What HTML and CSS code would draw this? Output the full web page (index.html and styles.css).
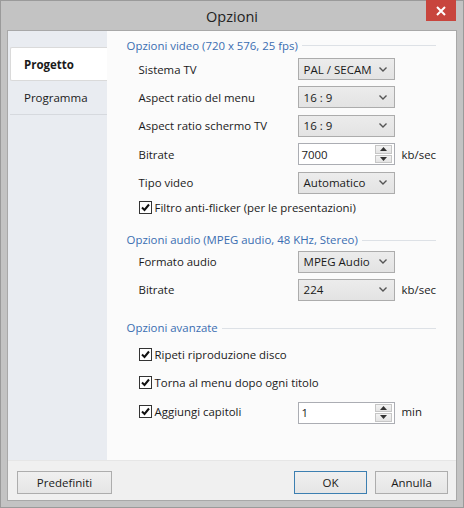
FILE: index.html
```html
<!DOCTYPE html>
<html>
<head>
<meta charset="utf-8">
<link rel="stylesheet" href="styles.css">
</head>
<body>
<div class="window">
  <div class="titlebar">
    <span class="title">Opzioni</span>
    <div class="close"><svg width="10" height="10" viewBox="0 0 10 10"><path d="M1 1L9 9M9 1L1 9" stroke="#fff" stroke-width="2"/></svg></div>
  </div>
  <div class="client">
    <div class="main">
      <div class="sidebar">
        <div class="tab active">Progetto</div>
        <div class="tab">Programma</div>
      </div>
      <div class="content">
        <div class="group-head"><span>Opzioni video (720 x 576, 25 fps)</span><i></i></div>
        <div class="rows video-rows">
          <span class="label">Sistema TV</span>
          <div class="select">PAL / SECAM<svg class="chev" width="8" height="5" viewBox="0 0 8 5"><path d="M0.5 0.5L4 4L7.5 0.5" fill="none" stroke="#555" stroke-width="1.4"/></svg></div>
          <span></span>
          <span class="label">Aspect ratio del menu</span>
          <div class="select">16 : 9<svg class="chev" width="8" height="5" viewBox="0 0 8 5"><path d="M0.5 0.5L4 4L7.5 0.5" fill="none" stroke="#555" stroke-width="1.4"/></svg></div>
          <span></span>
          <span class="label">Aspect ratio schermo TV</span>
          <div class="select">16 : 9<svg class="chev" width="8" height="5" viewBox="0 0 8 5"><path d="M0.5 0.5L4 4L7.5 0.5" fill="none" stroke="#555" stroke-width="1.4"/></svg></div>
          <span></span>
          <span class="label">Bitrate</span>
          <div class="spin"><span class="val">7000</span><div class="spinbtns"><div class="sb"><svg width="7" height="4" viewBox="0 0 7 4"><path d="M0 4L3.5 0L7 4Z" fill="#333"/></svg></div><div class="sb"><svg width="7" height="4" viewBox="0 0 7 4"><path d="M0 0L3.5 4L7 0Z" fill="#333"/></svg></div></div></div>
          <span class="unit">kb/sec</span>
          <span class="label">Tipo video</span>
          <div class="select">Automatico<svg class="chev" width="8" height="5" viewBox="0 0 8 5"><path d="M0.5 0.5L4 4L7.5 0.5" fill="none" stroke="#555" stroke-width="1.4"/></svg></div>
          <span></span>
        </div>
        <div class="check filtro"><span class="box"><svg width="11" height="11" viewBox="0 0 11 11"><path d="M2 5.5L4.5 8L9 2.5" fill="none" stroke="#111" stroke-width="2"/></svg></span>Filtro anti-flicker (per le presentazioni)</div>

        <div class="group-head audio-head"><span>Opzioni audio (MPEG audio, 48 KHz, Stereo)</span><i></i></div>
        <div class="rows audio-rows">
          <span class="label">Formato audio</span>
          <div class="select">MPEG Audio<svg class="chev" width="8" height="5" viewBox="0 0 8 5"><path d="M0.5 0.5L4 4L7.5 0.5" fill="none" stroke="#555" stroke-width="1.4"/></svg></div>
          <span></span>
          <span class="label">Bitrate</span>
          <div class="select">224<svg class="chev" width="8" height="5" viewBox="0 0 8 5"><path d="M0.5 0.5L4 4L7.5 0.5" fill="none" stroke="#555" stroke-width="1.4"/></svg></div>
          <span class="unit">kb/sec</span>
        </div>

        <div class="group-head adv-head"><span>Opzioni avanzate</span><i></i></div>
        <div class="adv-rows">
          <div class="check"><span class="box"><svg width="11" height="11" viewBox="0 0 11 11"><path d="M2 5.5L4.5 8L9 2.5" fill="none" stroke="#111" stroke-width="2"/></svg></span>Ripeti riproduzione disco</div>
          <div class="check"><span class="box"><svg width="11" height="11" viewBox="0 0 11 11"><path d="M2 5.5L4.5 8L9 2.5" fill="none" stroke="#111" stroke-width="2"/></svg></span>Torna al menu dopo ogni titolo</div>
          <div class="cap-row">
            <div class="check"><span class="box"><svg width="11" height="11" viewBox="0 0 11 11"><path d="M2 5.5L4.5 8L9 2.5" fill="none" stroke="#111" stroke-width="2"/></svg></span>Aggiungi capitoli</div>
            <div class="spin"><span class="val">1</span><div class="spinbtns"><div class="sb"><svg width="7" height="4" viewBox="0 0 7 4"><path d="M0 4L3.5 0L7 4Z" fill="#333"/></svg></div><div class="sb"><svg width="7" height="4" viewBox="0 0 7 4"><path d="M0 0L3.5 4L7 0Z" fill="#333"/></svg></div></div></div>
            <span class="unit">min</span>
          </div>
        </div>
      </div>
    </div>
    <div class="footer">
      <button class="btn btn-def">Predefiniti</button>
      <span class="grow"></span>
      <button class="btn btn-ok">OK</button>
      <button class="btn">Annulla</button>
    </div>
  </div>
</div>
</body>
</html>
```

FILE: styles.css
```css
* { box-sizing: border-box; }
html, body { margin: 0; padding: 0; }
body {
  font-family: "Open Sans", "Noto Sans", sans-serif;
  font-size: 11.4px;
  color: #1a1a1a;
  background: #c2c2c2;
}
.window {
  width: 464px;
  height: 508px;
  background: #c3c3c3;
  border: 1px solid #9a9a9a;
  padding: 0 6px 6px;
  display: flex;
  flex-direction: column;
}
.titlebar {
  height: 29px;
  display: flex;
  justify-content: center;
  align-items: center;
  position: relative;
}
.title {
  font-size: 14.5px;
  color: #222;
  margin-top: 2px;
}
.close {
  position: absolute;
  right: 1px;
  top: -1px;
  width: 30px;
  height: 21px;
  background: #c8453d;
  display: flex;
  align-items: center;
  justify-content: center;
}
.client {
  flex: 1;
  border: 1px solid #a8a8a8;
  background: #f0f0f0;
  display: flex;
  flex-direction: column;
}
.main {
  height: 429px;
  display: flex;
}
.sidebar {
  width: 99px;
  background: #e9ecf1;
  padding-top: 16px;
  padding-left: 2px;
}
.tab {
  height: 34px;
  display: flex;
  align-items: center;
  padding-left: 14px;
  font-size: 11.5px;
  border-bottom: 1px solid #d6d9de;
}
.tab.active {
  background: #ffffff;
  font-weight: bold;
  border: 1px solid #dadada;
  border-right: none;
  border-radius: 2px 0 0 2px;
  padding-left: 13px;
}
.content {
  flex: 1;
  background: #fbfbfb;
  padding: 6px 20px 0 20px;
}
.group-head {
  display: flex;
  align-items: center;
  height: 16px;
  color: #3a6db1;
}
.group-head span { white-space: nowrap; }
.group-head i {
  flex: 1;
  height: 1px;
  background: #dde1e6;
  margin-left: 4px;
  margin-top: 1px;
}
.rows {
  display: grid;
  grid-template-columns: 159px 97px auto;
  grid-auto-rows: 22px;
  row-gap: 6.4px;
  align-items: center;
  padding-left: 12px;
}
.video-rows { margin-top: 5px; }
.audio-rows { margin-top: 3px; row-gap: 6px; }
.label { white-space: nowrap; }
.unit { margin-left: 7px; }
.select {
  height: 22px;
  border: 1px solid #acacac;
  background: linear-gradient(#ececec, #e3e3e3);
  display: flex;
  align-items: center;
  padding-left: 5px;
  padding-right: 7px;
  font-size: 11.5px;
}
.select .chev { margin-left: auto; }
.spin {
  height: 22px;
  width: 97px;
  border: 1px solid #abadb3;
  background: #fff;
  display: flex;
  align-items: center;
  padding-left: 3px;
}
.spin .val { flex: 1; }
.spinbtns {
  width: 17px;
  height: 18px;
  display: flex;
  flex-direction: column;
  gap: 1px;
  margin-right: 2px;
}
.sb {
  flex: 1;
  background: linear-gradient(#f3f3f3, #e4e4e4);
  border: 1px solid #c6c6c6;
  display: flex;
  align-items: center;
  justify-content: center;
}
.check {
  display: flex;
  align-items: center;
  height: 22px;
  white-space: nowrap;
}
.box {
  width: 13px;
  height: 13px;
  border: 1px solid #333;
  background: #fff;
  margin-right: 3px;
  display: flex;
  align-items: center;
  justify-content: center;
}
.filtro { margin-top: 3px; padding-left: 12px; }
.audio-head { margin-top: 13px; }
.adv-head { margin-top: 19px; }
.adv-rows {
  margin-top: 8px;
  padding-left: 12px;
  display: flex;
  flex-direction: column;
  gap: 6px;
}
.cap-row {
  display: grid;
  grid-template-columns: 159px 97px auto;
  align-items: center;
}
.cap-row .spin { margin-top: 2px; }
.footer {
  flex: 1;
  display: flex;
  align-items: flex-start;
  padding: 10px 8px 0 9px;
  gap: 8px;
  border-top: 1px solid #e6e6e6;
}
.grow { flex: 1; }
.btn {
  font-family: inherit;
  font-size: 11.5px;
  color: #1a1a1a;
  height: 23px;
  width: 73px;
  border: 1px solid #adadad;
  background: linear-gradient(#f0f0f0, #e5e5e5);
  padding: 0;
}
.btn-def { width: 95px; }
.btn-ok { border-color: #3c7fb1; }
```
